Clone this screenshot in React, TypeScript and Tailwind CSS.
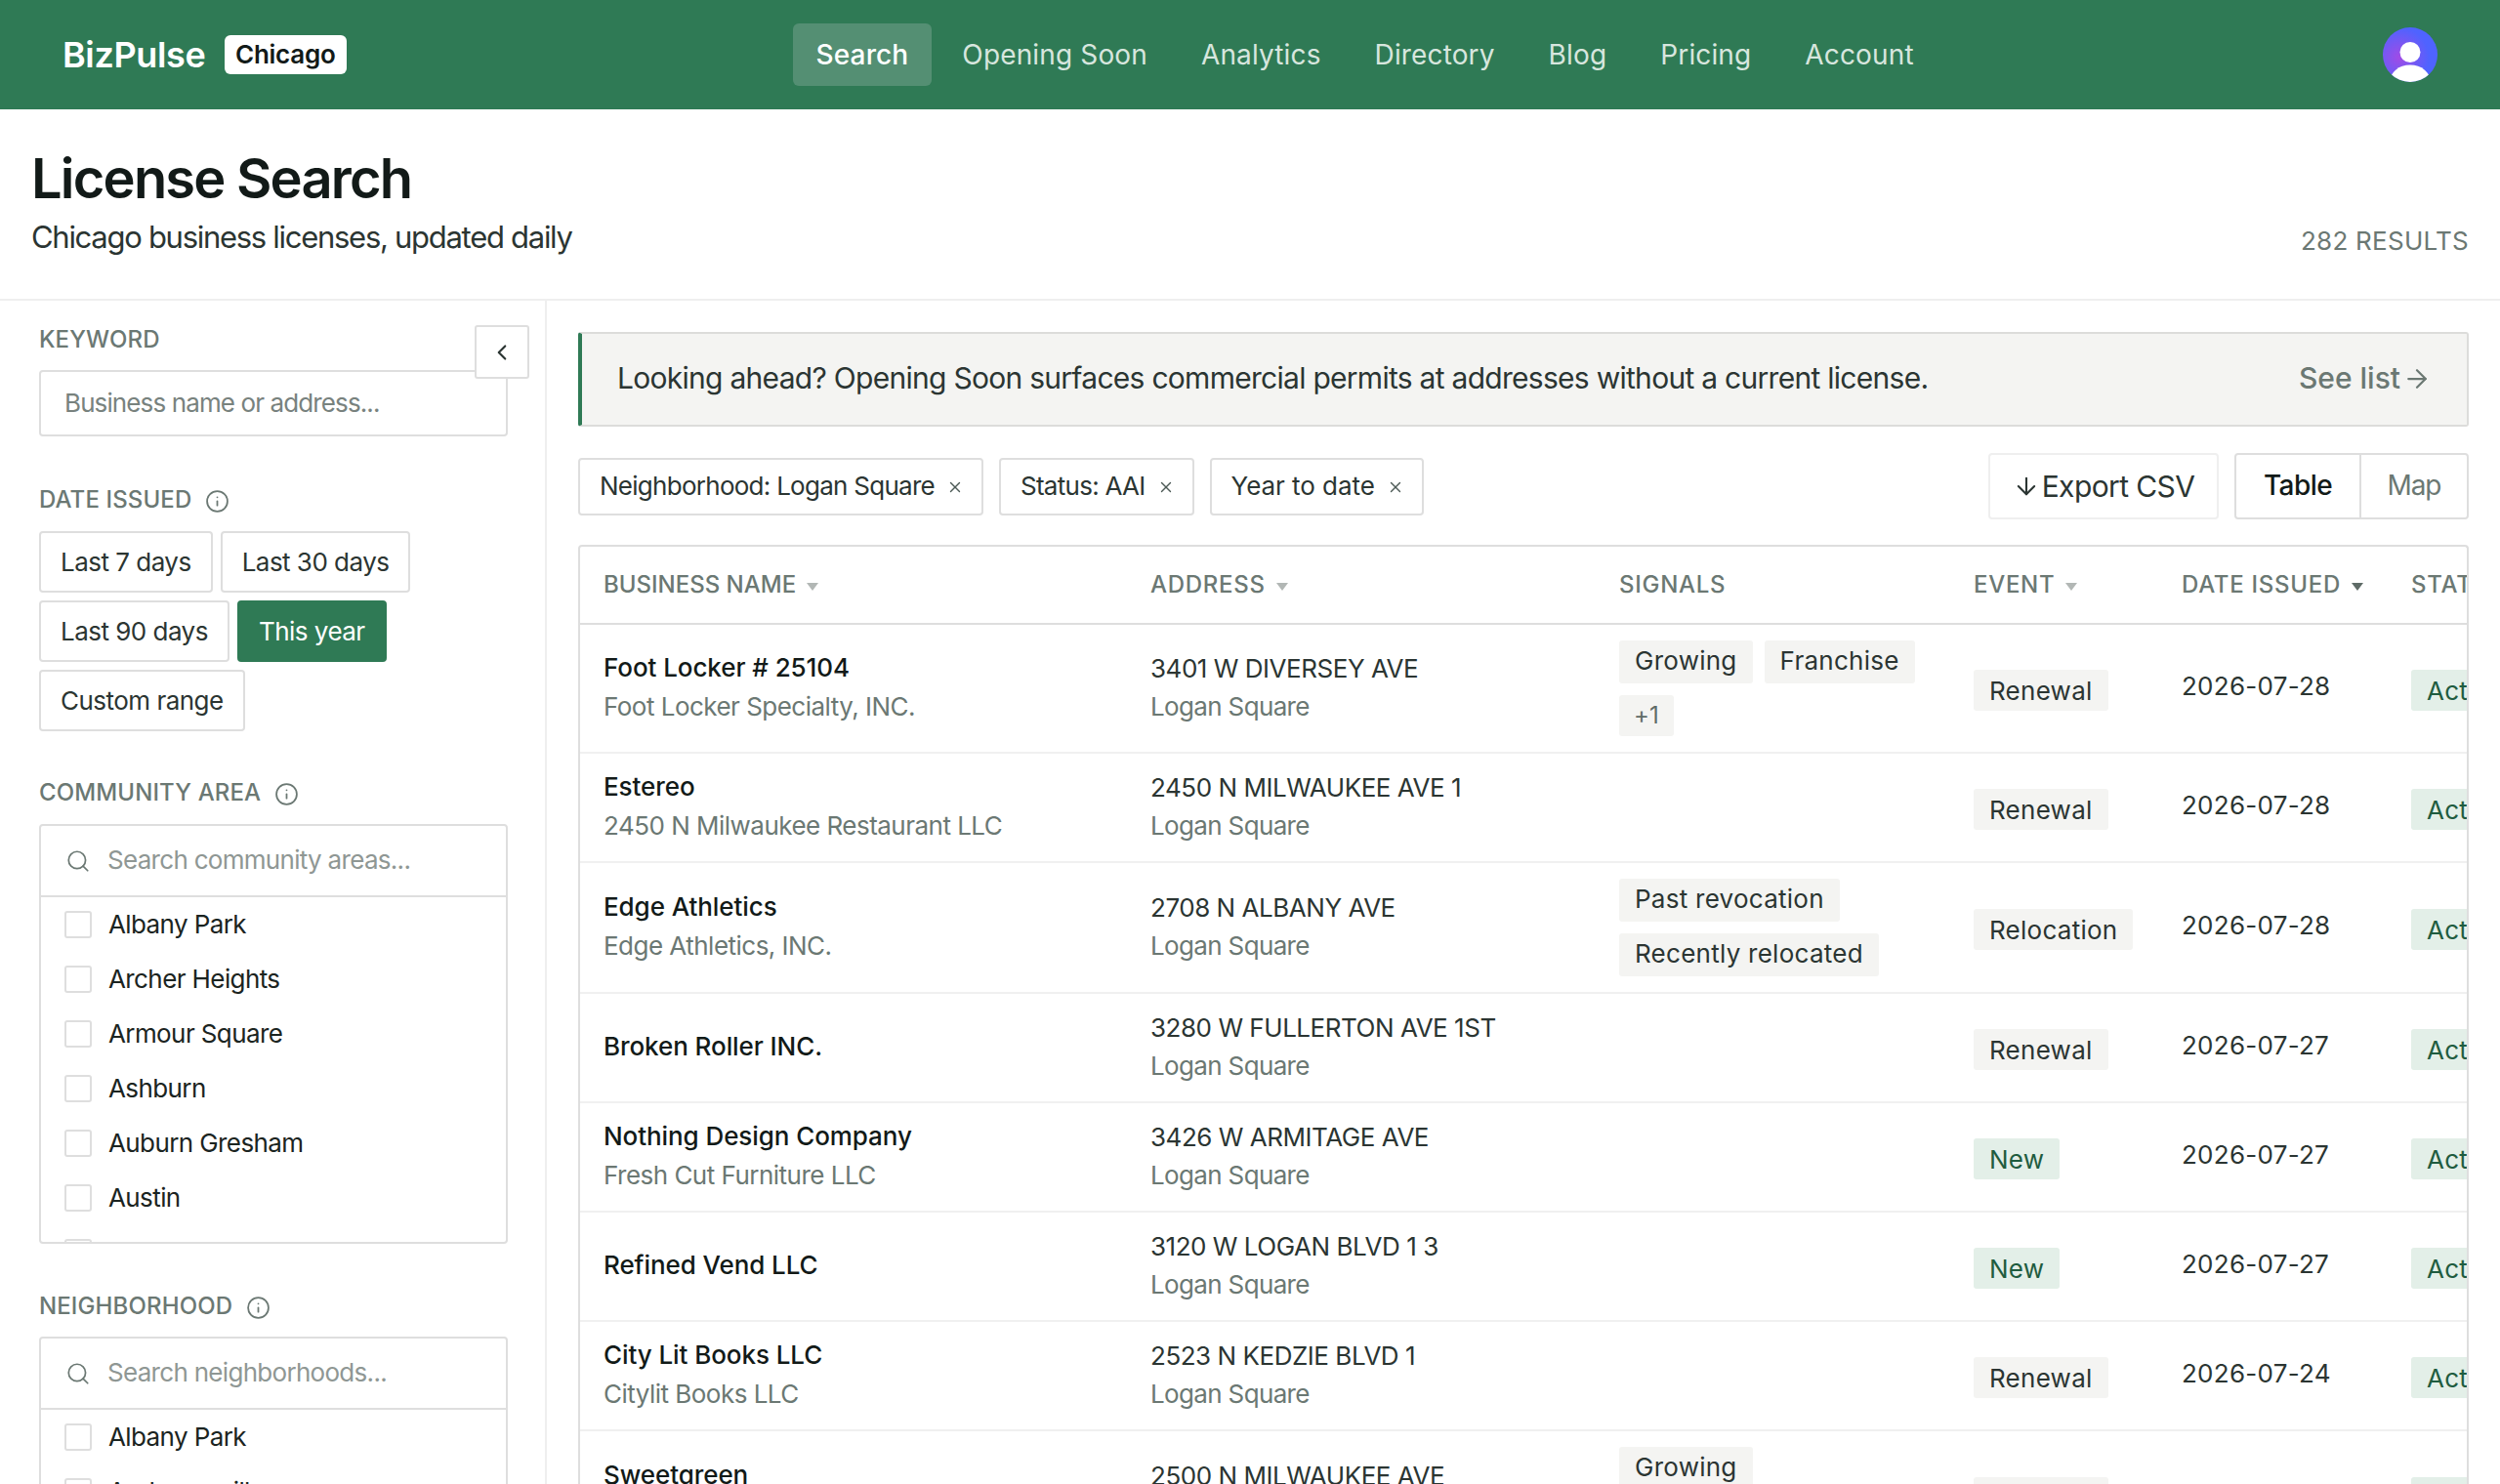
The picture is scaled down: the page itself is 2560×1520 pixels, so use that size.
import React from "react";
import { ChevronLeft, Info, Search, X, ArrowDown, ArrowRight } from "lucide-react";

const NAV = ["Search", "Opening Soon", "Analytics", "Directory", "Blog", "Pricing", "Account"];
const AREAS = ["Albany Park", "Archer Heights", "Armour Square", "Ashburn", "Auburn Gresham", "Austin", "Avalon Park"];
const HOODS = ["Albany Park", "Andersonville", "Archer Heights"];

type Row = {
  name: string;
  sub?: string;
  addr: string;
  signals: string[][];
  event: string;
  date: string;
};

const ROWS: Row[] = [
  { name: "Foot Locker # 25104", sub: "Foot Locker Specialty, INC.", addr: "3401 W DIVERSEY AVE", signals: [["Growing", "Franchise"], ["+1"]], event: "Renewal", date: "2026-07-28" },
  { name: "Estereo", sub: "2450 N Milwaukee Restaurant LLC", addr: "2450 N MILWAUKEE AVE 1", signals: [], event: "Renewal", date: "2026-07-28" },
  { name: "Edge Athletics", sub: "Edge Athletics, INC.", addr: "2708 N ALBANY AVE", signals: [["Past revocation"], ["Recently relocated"]], event: "Relocation", date: "2026-07-28" },
  { name: "Broken Roller INC.", addr: "3280 W FULLERTON AVE 1ST", signals: [], event: "Renewal", date: "2026-07-27" },
  { name: "Nothing Design Company", sub: "Fresh Cut Furniture LLC", addr: "3426 W ARMITAGE AVE", signals: [], event: "New", date: "2026-07-27" },
  { name: "Refined Vend LLC", addr: "3120 W LOGAN BLVD 1 3", signals: [], event: "New", date: "2026-07-27" },
  { name: "City Lit Books LLC", sub: "Citylit Books LLC", addr: "2523 N KEDZIE BLVD 1", signals: [], event: "Renewal", date: "2026-07-24" },
  { name: "Sweetgreen", sub: "Sweetgreen, INC.", addr: "2500 N MILWAUKEE AVE", signals: [["Growing"], ["Franchise"]], event: "Renewal", date: "2026-07-24" },
];

function Label({ children, info }: { children: React.ReactNode; info?: boolean }) {
  return (
    <div className="flex h-[36px] items-center gap-[14px] text-[24px] font-medium tracking-[0.005em] text-[#6b7873] uppercase">
      <span>{children}</span>
      {info && <Info className="mt-[3px] h-[25px] w-[25px]" strokeWidth={1.7} />}
    </div>
  );
}

function RangeButton({ children, active }: { children: React.ReactNode; active?: boolean }) {
  return (
    <div
      className={
        active
          ? "flex h-[63px] items-center rounded-[4px] border-2 border-[#2f7a55] bg-[#2f7a55] px-[20px] text-[26px] tracking-[-0.02em] text-white"
          : "flex h-[63px] items-center rounded-[4px] border-2 border-[#dedede] bg-white px-[20px] text-[26px] tracking-[-0.02em] text-[#2b3532]"
      }
    >
      {children}
    </div>
  );
}

function CheckList({ placeholder, items, height }: { placeholder: string; items: string[]; height: string }) {
  return (
    <div className={`overflow-hidden rounded-[4px] border-2 border-[#dedede] ${height}`}>
      <div className="flex h-[73px] items-center gap-[17px] border-b-2 border-[#dedede] pl-[25px]">
        <Search className="h-[26px] w-[26px] shrink-0 text-[#6b7873]" strokeWidth={1.6} />
        <input
          readOnly
          placeholder={placeholder}
          className="mb-[3px] w-full bg-transparent text-[26px] tracking-[-0.027em] outline-none placeholder:text-[#8f9794]"
        />
      </div>
      <div>
        {items.map((a) => (
          <div key={a} className="flex h-[56px] items-center gap-[17px] pl-[24px]">
            <div className="h-[28px] w-[28px] shrink-0 rounded-[3px] border-2 border-[#dedede] bg-white" />
            <span className="pb-[1px] text-[26px] tracking-[-0.023em] text-[#1b2421]">{a}</span>
          </div>
        ))}
      </div>
    </div>
  );
}

function Chip({ children, loose }: { children: React.ReactNode; loose?: boolean }) {
  return (
    <div className="flex h-[59px] items-center gap-[12px] rounded-[4px] border-2 border-[#dedede] bg-white pr-[18px] pl-[20px] text-[26px] text-[#2b3532]">
      <span className={loose ? "pb-[2px] tracking-[-0.002em]" : "pb-[2px] tracking-[-0.028em]"}>{children}</span>
      <X className="mt-[2px] h-[18px] w-[18px] text-[#4d5a56]" strokeWidth={1.8} />
    </div>
  );
}

function Tag({ children, green, small, tall }: { children: React.ReactNode; green?: boolean; small?: boolean; tall?: boolean }) {
  return (
    <span
      className={`inline-flex items-center rounded-[3px] tracking-[0.01em] ${tall ? "h-[44px] pb-[3px]" : "h-[42px]"} ${
        green ? "bg-[#e3efe8] text-[#1f5c3f]" : "bg-[#f4f4f2] text-[#2b3532]"
      } ${small ? "px-[15px] text-[24px] text-[#5f6b67]" : "px-[16px] text-[26px]"}`}
    >
      {children}
    </span>
  );
}

function Sort({ dark }: { dark?: boolean }) {
  return (
    <span
      className={`ml-[11px] inline-block h-0 w-0 border-x-[6.5px] border-t-[8px] border-x-transparent align-[2px] ${
        dark ? "border-t-[#5f6b67]" : "border-t-[#b2b7b5]"
      }`}
    />
  );
}

function Th({ children, sort, dark, tight }: { children: React.ReactNode; sort?: boolean; dark?: boolean; tight?: boolean }) {
  return (
    <th
      className={`h-[79px] border-b-2 border-[#dedede] pl-[24px] text-left text-[24px] font-medium whitespace-nowrap text-[#6b7873] uppercase ${
        tight ? "tracking-[0em]" : "tracking-[0.03em]"
      }`}
    >
      {children}
      {sort && <Sort dark={dark} />}
    </th>
  );
}

function DataRow({ row }: { row: Row }) {
  const isNew = row.event === "New";
  return (
    <tr className="h-[112px] border-b-2 border-[#f0f0f0]">
      <td className="pb-[2px] pl-[24px] align-middle">
        <div className="text-[26px] leading-[40px] font-medium tracking-[-0.003em] text-[#121a18]">{row.name}</div>
        {row.sub && <div className="text-[26px] leading-[40px] tracking-[-0.02em] text-[#6b7873]">{row.sub}</div>}
      </td>
      <td className="pb-[2px] pl-[24px] align-middle">
        <div className="text-[26px] leading-[39px] tracking-[-0.018em] text-[#2b3532]">{row.addr}</div>
        <div className="text-[26px] leading-[39px] tracking-[-0.025em] text-[#6b7873]">Logan Square</div>
      </td>
      <td className="py-[16px] pl-[24px] align-middle">
        <div className="flex flex-col gap-[12px]">
          {row.signals.map((line, i) => (
            <div key={i} className="flex gap-[12px]">
              {line.map((s) => (
                <Tag key={s} small={s === "+1"} tall={s !== "+1"}>
                  {s}
                </Tag>
              ))}
            </div>
          ))}
        </div>
      </td>
      <td className="pl-[24px] align-middle">
        <div className="pt-[4px]">
          <Tag green={isNew}>{row.event}</Tag>
        </div>
      </td>
      <td className="pb-[6px] pl-[24px] align-middle text-[26px] tracking-[0.01em] text-[#2b3532]">{row.date}</td>
      <td className="pl-[24px] align-middle">
        <div className="pt-[4px]">
          <Tag green>Active</Tag>
        </div>
      </td>
    </tr>
  );
}

export default function App() {
  return (
    <div className="flex h-[1520px] flex-col overflow-hidden bg-white font-['Inter',sans-serif] text-[#121a18]">
      <header className="flex h-[112px] shrink-0 items-center bg-[#2f7a55] pr-[64px] pl-[64px]">
        <div className="w-[148px] text-[36px] font-semibold tracking-[-0.01em] text-white">BizPulse</div>
        <div className="ml-[18px] flex h-[40px] items-center rounded-[6px] bg-white px-[11px] pb-[2px] text-[26px] font-semibold tracking-[-0.01em] text-[#121a18]">
          Chicago
        </div>
        <nav className="ml-[457px] flex items-center gap-[7px] text-[28px] tracking-[0.005em] text-[#d7e6de]">
          {NAV.map((n, i) => (
            <div
              key={n}
              className={
                i === 0
                  ? "flex h-[64px] items-center rounded-[6px] bg-[#548f73] px-[24px] font-medium text-white"
                  : "flex h-[64px] items-center px-[24px]"
              }
            >
              {n}
            </div>
          ))}
        </nav>
        <div className="ml-auto">
          <svg width="56" height="56" viewBox="0 0 56 56">
            <defs>
              <radialGradient id="av" cx="0.3" cy="0.55" r="0.55">
                <stop offset="0" stopColor="#a14be6" />
                <stop offset="1" stopColor="#4f63ff" />
              </radialGradient>
              <clipPath id="avc">
                <circle cx="28" cy="28" r="28" />
              </clipPath>
            </defs>
            <circle cx="28" cy="28" r="28" fill="url(#av)" />
            <g clipPath="url(#avc)" fill="#fff">
              <circle cx="28" cy="25.5" r="10.5" />
              <ellipse cx="28" cy="56" rx="21" ry="17.5" />
            </g>
          </svg>
        </div>
      </header>

      <section className="flex h-[196px] shrink-0 justify-between border-b-2 border-[#efefef] px-[32px]">
        <div className="pt-[38px]">
          <h1 className="text-[56px] leading-[66px] font-semibold tracking-[-0.032em] text-[#121a18]">License Search</h1>
          <p className="mt-[5px] text-[31px] leading-[44px] tracking-[-0.0415em] text-[#2b3532]">
            Chicago business licenses, updated daily
          </p>
        </div>
        <div className="self-end pb-[40px] text-[26px] tracking-[0.01em] text-[#6b7873] uppercase">282 results</div>
      </section>

      <div className="flex min-h-0 flex-1">
        <aside className="relative w-[560px] shrink-0 overflow-hidden border-r-2 border-[#efefef] pt-[22px] pr-[38px] pl-[40px]">
          <button className="absolute top-[25px] left-[486px] flex h-[55px] w-[56px] items-center justify-center rounded-[3px] border-2 border-[#dedede] bg-white text-[#2b3532]">
            <ChevronLeft className="h-[26px] w-[26px]" strokeWidth={2} />
          </button>
          <Label>Keyword</Label>
          <input
            readOnly
            placeholder="Business name or address..."
            className="mt-[13px] block h-[68px] w-full rounded-[4px] border-2 border-[#dedede] px-[24px] pb-[2px] text-[26px] tracking-[-0.034em] outline-none placeholder:text-[#78827e]"
          />
          <div className="mt-[47px]">
            <Label info>Date issued</Label>
          </div>
          <div className="mt-[14px] flex flex-wrap items-start gap-[8px]">
            <RangeButton>Last 7 days</RangeButton>
            <RangeButton>Last 30 days</RangeButton>
            <RangeButton>Last 90 days</RangeButton>
            <RangeButton active>This year</RangeButton>
            <RangeButton>Custom range</RangeButton>
          </div>
          <div className="mt-[45px]">
            <Label info>Community area</Label>
          </div>
          <div className="mt-[14px]">
            <CheckList placeholder="Search community areas..." items={AREAS} height="h-[430px]" />
          </div>
          <div className="mt-[46px]">
            <Label info>Neighborhood</Label>
          </div>
          <div className="mt-[13px]">
            <CheckList placeholder="Search neighborhoods..." items={HOODS} height="h-[430px]" />
          </div>
        </aside>

        <main className="min-w-0 flex-1 overflow-hidden pt-[32px] pr-[32px] pl-[32px]">
          <div className="flex h-[97px] items-center justify-between rounded-[3px] border-2 border-l-4 border-[#dcdcda] border-l-[#2f7a55] bg-[#f4f4f2] pr-[36px] pl-[36px]">
            <span className="pb-[2px] text-[30px] tracking-[-0.024em] text-[#2b3532]">
              Looking ahead? Opening Soon surfaces commercial permits at addresses without a current license.
            </span>
            <span className="flex items-center gap-[2px] pb-[2px] text-[30px] font-medium text-[#6b7873]">
              See list <ArrowRight className="h-[30px] w-[30px]" strokeWidth={1.8} />
            </span>
          </div>

          <div className="mt-[27px] flex items-center">
            <div className="flex gap-[16px]">
              <Chip>Neighborhood: Logan Square</Chip>
              <Chip>Status: AAI</Chip>
              <Chip loose>Year to date</Chip>
            </div>
            <div className="ml-auto flex items-center gap-[16px]">
              <div className="flex h-[68px] w-[236px] items-center justify-center gap-[2px] rounded-[4px] border-2 border-[#efefef] text-[30px] tracking-[-0.02em] text-[#2b3532]">
                <ArrowDown className="h-[28px] w-[28px]" strokeWidth={1.8} />
                Export CSV
              </div>
              <div className="flex h-[68px] w-[240px] overflow-hidden rounded-[4px] border-2 border-[#dedede] pb-[2px] text-[28px] tracking-[-0.02em]">
                <div className="flex w-[126px] items-center justify-center font-medium text-[#121a18]">Table</div>
                <div className="-mb-[2px] w-[2px] bg-[#dedede]" />
                <div className="flex flex-1 items-center justify-center tracking-[-0.04em] text-[#6b7873]">Map</div>
              </div>
            </div>
          </div>

          <div className="mt-[26px] overflow-hidden rounded-t-[4px] border-x-2 border-t-2 border-[#dedede]">
            <table className="w-[2140px] table-fixed border-collapse">
              <colgroup>
                <col className="w-[560px]" />
                <col className="w-[480px]" />
                <col className="w-[363px]" />
                <col className="w-[213px]" />
                <col className="w-[235px]" />
                <col className="w-[289px]" />
              </colgroup>
              <thead>
                <tr>
                  <Th sort tight>
                    Business name
                  </Th>
                  <Th sort>Address</Th>
                  <Th>Signals</Th>
                  <Th sort>Event</Th>
                  <Th sort dark>
                    Date issued
                  </Th>
                  <Th>Status</Th>
                </tr>
              </thead>
              <tbody>
                {ROWS.map((r) => (
                  <DataRow key={r.name} row={r} />
                ))}
              </tbody>
            </table>
          </div>
        </main>
      </div>
    </div>
  );
}
